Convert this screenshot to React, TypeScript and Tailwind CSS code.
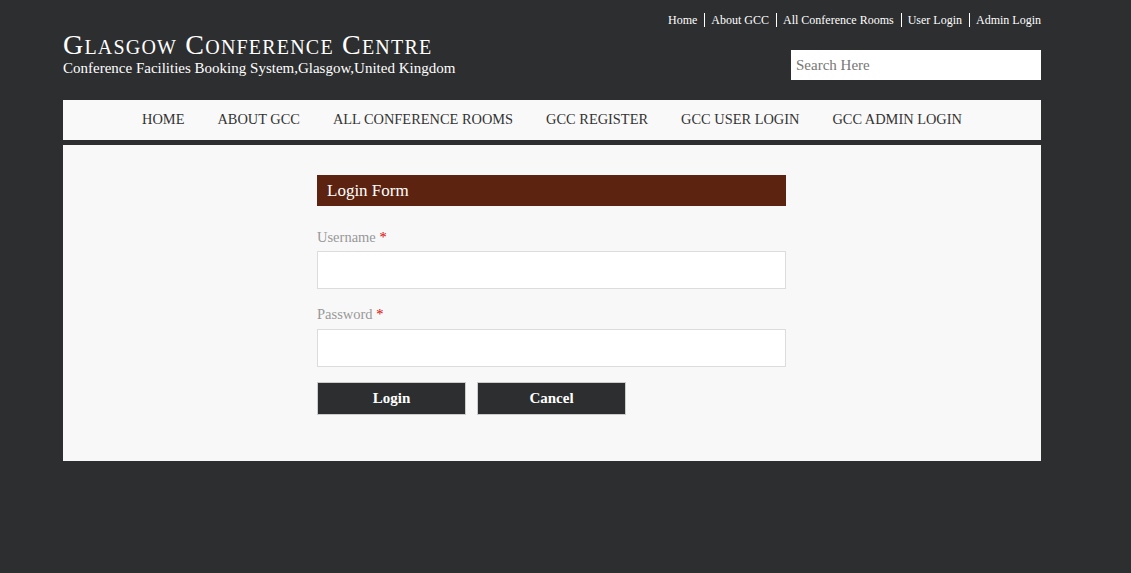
import React from 'react';

export default function App() {
  const topLinks = ['Home', 'About GCC', 'All Conference Rooms', 'User Login', 'Admin Login'];
  const nav = ['HOME', 'ABOUT GCC', 'ALL CONFERENCE ROOMS', 'GCC REGISTER', 'GCC USER LOGIN', 'GCC ADMIN LOGIN'];

  return (
    <div className="min-h-[573px] bg-[#2d2e30] font-['Liberation_Serif',Georgia,serif]">
      <div className="w-[978px] ml-[63px]">
        {/* header */}
        <div className="flex justify-between h-[100px]">
          <div className="pt-[30px]">
            <h1 className="text-[28px] leading-[30px] text-white tracking-[1.2px]" style={{ fontVariant: 'small-caps' }}>
              Glasgow Conference Centre
            </h1>
            <p className="text-[15px] leading-[16px] text-white">Conference Facilities Booking System,Glasgow,United Kingdom</p>
          </div>
          <div className="flex flex-col items-end">
            <ul className="flex items-center mt-[13px] text-[12px] leading-[14px] text-white">
              {topLinks.map((l, i) => (
                <li key={l} className={i === 0 ? '' : 'border-l border-white ml-[7px] pl-[6px]'}>
                  {l}
                </li>
              ))}
            </ul>
            <input
              placeholder="Search Here"
              className="mt-[23px] w-[250px] h-[30px] bg-white px-[5px] text-[15px] text-[#555] placeholder:text-[#777] outline-none"
            />
          </div>
        </div>

        {/* nav */}
        <nav className="h-[40px] bg-[#f9f9f9] flex items-center justify-center gap-[33px] text-[14.4px] text-[#333]">
          {nav.map((n) => (
            <span key={n}>{n}</span>
          ))}
        </nav>

        {/* content */}
        <div className="mt-[5px] h-[316px] bg-[#f8f8f8] pt-[30px]">
          <div className="w-[469px] ml-[254px]">
            <div className="h-[31px] bg-[#5c2310] text-white text-[17px] leading-[31px] px-[10px]">Login Form</div>
            <label className="block mt-[23px] text-[14.5px] leading-[16px] text-[#999]">
              Username <span className="text-[#d00]">*</span>
            </label>
            <input className="mt-[6px] block w-full h-[38px] bg-white border border-[#dcdcdc] outline-none" />
            <label className="block mt-[17px] text-[14.5px] leading-[16px] text-[#999]">
              Password <span className="text-[#d00]">*</span>
            </label>
            <input type="password" className="mt-[7px] block w-full h-[38px] bg-white border border-[#dcdcdc] outline-none" />
            <div className="flex gap-[11px] mt-[15px]">
              <button className="w-[149px] h-[33px] bg-[#2d2e30] border border-[#ccc] text-white font-bold text-[15px]">Login</button>
              <button className="w-[149px] h-[33px] bg-[#2d2e30] border border-[#ccc] text-white font-bold text-[15px]">Cancel</button>
            </div>
          </div>
        </div>
      </div>
    </div>
  );
}
